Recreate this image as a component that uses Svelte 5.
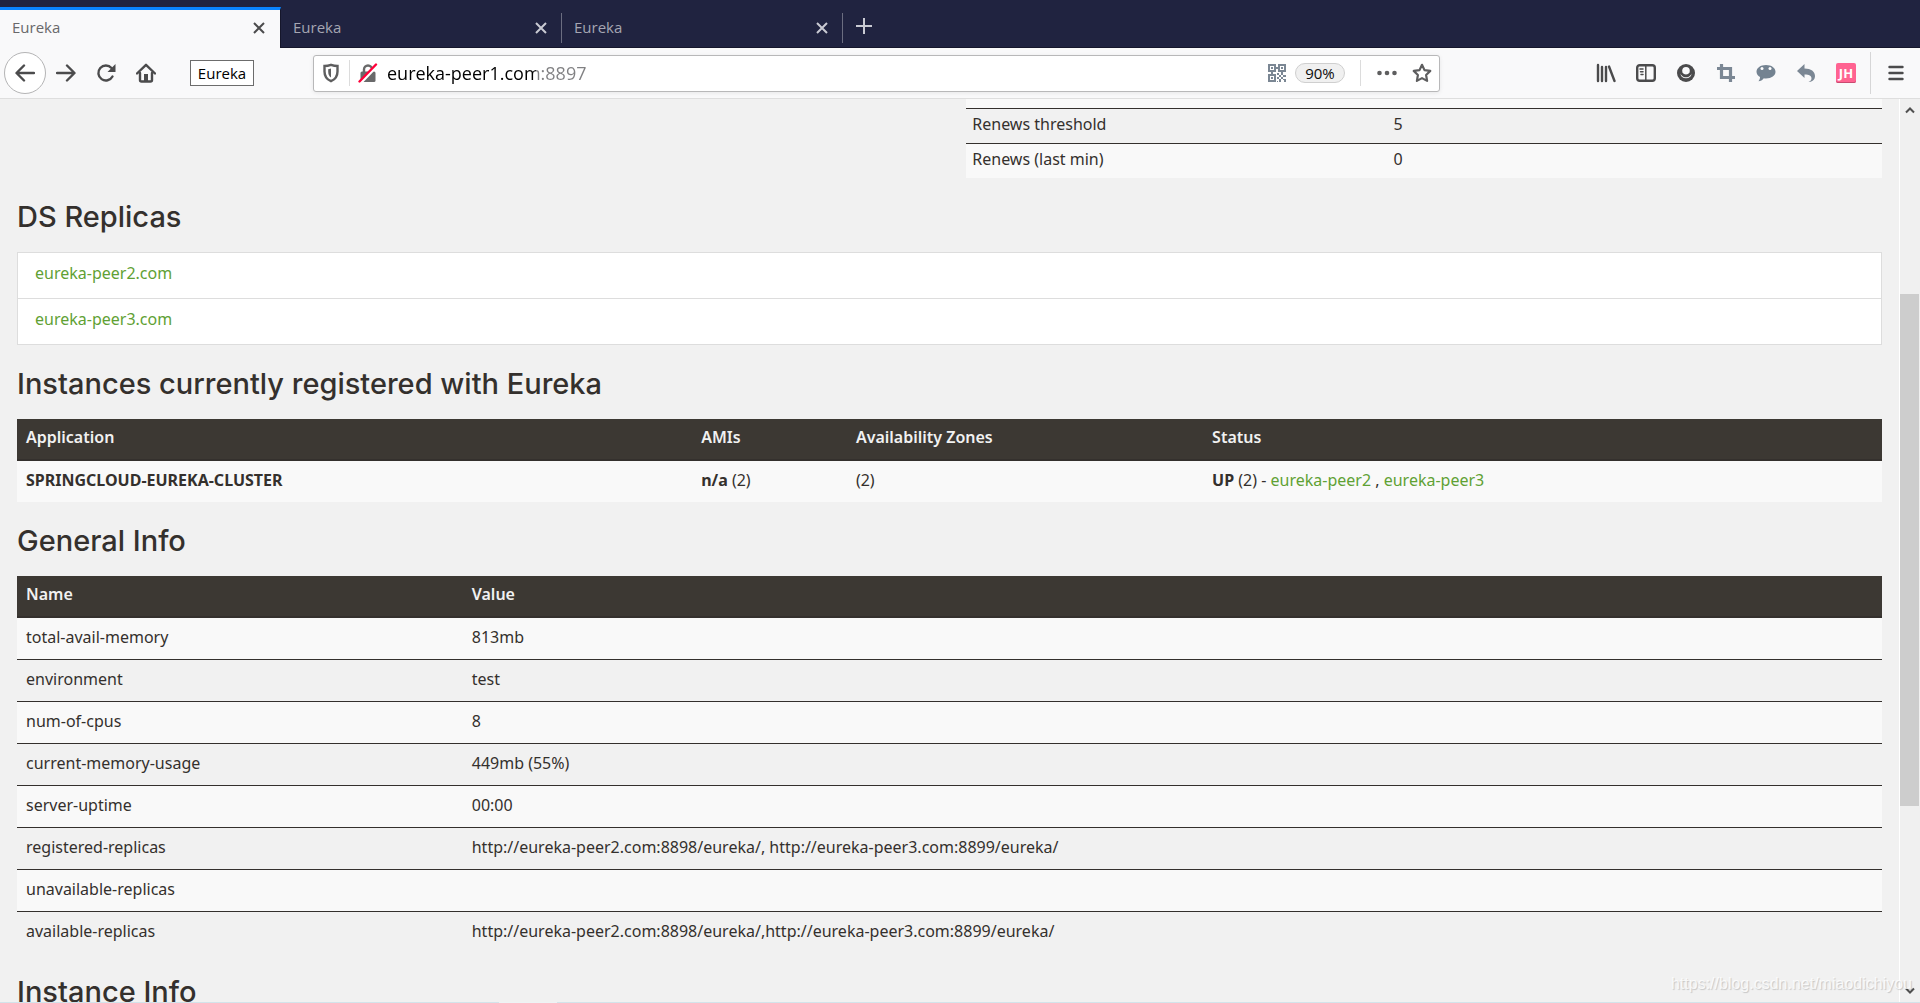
<script>
  let address = $state('eureka-peer1.com:8897');
  let active = $state(0);

  const tabs = ['Eureka', 'Eureka', 'Eureka'];

  const replicas = ['eureka-peer2.com', 'eureka-peer3.com'];

  const renews = [
    ['Renews threshold', '5'],
    ['Renews (last min)', '0'],
  ];

  const generalInfo = [
    ['total-avail-memory', '813mb'],
    ['environment', 'test'],
    ['num-of-cpus', '8'],
    ['current-memory-usage', '449mb (55%)'],
    ['server-uptime', '00:00'],
    ['registered-replicas', 'http://eureka-peer2.com:8898/eureka/, http://eureka-peer3.com:8899/eureka/'],
    ['unavailable-replicas', ''],
    ['available-replicas', 'http://eureka-peer2.com:8898/eureka/,http://eureka-peer3.com:8899/eureka/'],
  ];
</script>

<div class="browser">
  <div class="tabs">
    {#each tabs as tab, i}
      <div class="tab" class:tab--active={i === active}>
        <button class="tab-title" onclick={() => (active = i)}>{tab}</button>
        <button class="tab-close" aria-label="Close tab">
          <svg width="12" height="12" viewBox="0 0 12 12"><path d="M1 1l10 10M11 1L1 11" /></svg>
        </button>
      </div>
    {/each}
    <button class="new-tab" aria-label="New tab">
      <svg width="18" height="18" viewBox="0 0 18 18"><path d="M9 1v16M1 9h16" /></svg>
    </button>
  </div>

  <div class="toolbar">
    <button class="tool tool--back" aria-label="Back">
      <svg width="20" height="20" viewBox="0 0 20 20" class="line"><path d="M19 10H2M9 2.5L1.5 10 9 17.5" /></svg>
    </button>
    <button class="tool" aria-label="Forward">
      <svg width="20" height="20" viewBox="0 0 20 20" class="line"><path d="M1 10h17M11 2.500l7.500 7.500-7.500 7.500" /></svg>
    </button>
    <button class="tool" aria-label="Reload">
      <svg width="20" height="20" viewBox="0 0 20 20" class="line">
        <path d="M16.500 13.500A7.500 7.500 0 1 1 15.500 5" />
        <path d="M19.500 1v8h-8z" class="fill" />
      </svg>
    </button>
    <button class="tool" aria-label="Home">
      <svg width="20" height="20" viewBox="0 0 20 20" class="line">
        <path d="M1 10.500L10 1.800l9 8.700" />
        <path d="M4 10v7q0 1.500 1.500 1.500h9q1.500 0 1.500-1.500v-7" />
        <path d="M8 11h4v7H8z" class="fill" />
      </svg>
    </button>
    <button class="bookmark">Eureka</button>

    <div class="urlbar">
      <button class="url-icon" aria-label="Tracking protection">
        <svg width="18" height="20" viewBox="0 0 18 20">
          <path d="M9 1.800c2.500.9 4.800 1.200 6.500 1.200v5.500c0 4.500-2 7.800-6.500 9.700-4.500-1.900-6.500-5.200-6.500-9.700V3c1.700 0 4-.3 6.500-1.200z" fill="none" stroke="#5e5e5f" stroke-width="2.400" />
          <path d="M9 5.500v9c-2-1.200-2.800-3.300-2.800-6V6.200z" fill="#5e5e5f" />
        </svg>
      </button>
      <span class="url-sep"></span>
      <button class="url-icon" aria-label="Connection is not secure">
        <svg width="20" height="20" viewBox="0 0 20 20">
          <path d="M6 9V6.500a4 4 0 0 1 8 0V9" fill="none" stroke="#69696a" stroke-width="2.400" />
          <rect x="2.500" y="8.500" width="15" height="10.500" rx="1.500" fill="#69696a" />
          <path d="M2.500 20L19 3" stroke="#fff" stroke-width="3" />
          <path d="M1.500 18.500L18 1.500" stroke="#ff0039" stroke-width="2.400" stroke-linecap="round" />
        </svg>
      </button>
      <input class="address" type="text" aria-label="Address" bind:value={address} />
      <button class="url-icon" aria-label="QR code">
        <svg width="18" height="18" viewBox="0 0 18 18" fill="#7b8794">
          <path d="M0 0h8v8H0zM2 2v4h4V2zM10 0h8v8h-8zM12 2v4h4V2zM0 10h8v8H0zM2 12v4h4v-4z" fill-rule="evenodd" />
          <path d="M3 3h2v2H3zM13 3h2v2h-2zM3 13h2v2H3zM8 3h2v2H8zM3 8h2v2H3zM13 8h2v2h-2z" />
          <path d="M9 9h2v2H9zM11 11h2v2h-2zM13 9h2v2h-2zM15 11h3v2h-3zM9 13h2v2H9zM13 13h2v2h-2zM11 15h2v3h-2zM15 15h3v3h-2v-2h-1zM9 17h1v1H9z" />
        </svg>
      </button>
      <button class="zoom">90%</button>
      <span class="url-sep url-sep--wide"></span>
      <button class="url-icon" aria-label="Page actions">
        <svg width="20" height="20" viewBox="0 0 20 20" fill="#5e5e5f">
          <circle cx="2.500" cy="10" r="2.300" /><circle cx="10" cy="10" r="2.300" /><circle cx="17.500" cy="10" r="2.300" />
        </svg>
      </button>
      <button class="url-icon url-icon--star" aria-label="Bookmark this page">
        <svg width="20" height="20" viewBox="0 0 20 20">
          <path d="M10 1.800l2.500 5.300 5.800.8-4.200 4.100 1 5.900L10 15.100 4.900 17.900l1-5.900L1.700 7.900l5.800-.8z" fill="none" stroke="#5e5e5f" stroke-width="2.200" stroke-linejoin="round" />
        </svg>
      </button>
    </div>

    <button class="tool" aria-label="Library">
      <svg width="20" height="20" viewBox="0 0 20 20" class="line">
        <path d="M2 2v16M6 4v14M10 4v14M13 3.500L18.500 18" />
      </svg>
    </button>
    <button class="tool" aria-label="Sidebars">
      <svg width="20" height="20" viewBox="0 0 20 20" class="line">
        <rect x="1.200" y="2.200" width="17.600" height="15.600" rx="2.500" />
        <path d="M9.800 2v16" class="thin" />
        <path d="M4 6h3M4.500 8.800h2.500M5 11.600h2" class="thin" />
      </svg>
    </button>
    <button class="tool" aria-label="Account">
      <svg width="20" height="20" viewBox="0 0 20 20">
        <circle cx="10" cy="10" r="9" fill="#4b4b4c" />
        <path d="M4.300 10.500a5.800 5.800 0 0 0 11.400 0c-1 1.800-2 2.500-3 3.200q-2.700 1.300-5.400 0c-1-.7-2-1.400-3-3.200z" fill="#f9f9fa" />
        <circle cx="10" cy="7.800" r="3.800" fill="#f9f9fa" />
        <path d="M6 10.500q4 4.500 8 0" fill="none" stroke="#4b4b4c" stroke-width="1.500" />
      </svg>
    </button>
    <button class="tool" aria-label="Screenshot">
      <svg width="20" height="20" viewBox="0 0 20 20" fill="none" stroke="#7b8794" stroke-width="3.200">
        <path d="M5.500 1v13.500H19M1 5.500h13.500V19" />
      </svg>
    </button>
    <button class="tool" aria-label="Messages">
      <svg width="20" height="20" viewBox="0 0 20 20">
        <path d="M10 2c5.500 0 9.500 2.900 9.500 6.800S15.500 15.500 10 15.500c-.8 0-1.500 0-2.200-.2C6.500 17.200 4.500 18.300 2.500 18.300c.9-1 1.600-2.500 1.500-4.200C1.800 12.900.5 11 .5 8.800.5 4.900 4.500 2 10 2z" fill="#748391" />
        <circle cx="6" cy="5.500" r="1.500" fill="#fff" /><circle cx="14" cy="5.500" r="1.500" fill="#fff" />
      </svg>
    </button>
    <button class="tool" aria-label="Undo close tab">
      <svg width="20" height="20" viewBox="0 0 20 20">
        <path d="M8.500 1v4.500c6.500 0 10.500 3 10.500 7.500 0 3.500-2.500 6-6.500 6 2.500-1.200 3-2.500 3-3.800 0-2.200-2.300-3.700-7-3.700V15L1 8z" fill="#7b8794" />
      </svg>
    </button>
    <button class="tool" aria-label="JH extension">
      <span class="jh">JH</span>
    </button>
    <span class="tool-sep"></span>
    <button class="tool" aria-label="Open menu">
      <svg width="20" height="20" viewBox="0 0 20 20" class="line"><path d="M3.500 4h13M3.500 10h13M3.500 16h13" /></svg>
    </button>
  </div>

  <div class="viewport">
    <main>
      <table class="renews">
        <colgroup><col class="c-renew" /><col /></colgroup>
        <tbody>
          <tr class="cut"><td></td><td></td></tr>
          {#each renews as [name, value]}
            <tr><td>{name}</td><td>{value}</td></tr>
          {/each}
        </tbody>
      </table>

      <h1>DS Replicas</h1>
      <ul class="replicas">
        {#each replicas as replica}
          <li><a href="#{replica}">{replica}</a></li>
        {/each}
      </ul>

      <h1>Instances currently registered with Eureka</h1>
      <table class="striped">
        <colgroup><col class="c-app" /><col class="c-ami" /><col class="c-zone" /><col /></colgroup>
        <thead>
          <tr><th>Application</th><th>AMIs</th><th>Availability Zones</th><th>Status</th></tr>
        </thead>
        <tbody>
          <tr>
            <td><b>SPRINGCLOUD-EUREKA-CLUSTER</b></td>
            <td><b>n/a</b> (2)</td>
            <td>(2)</td>
            <td><b>UP</b> (2) - <a href="#peer2">eureka-peer2</a> , <a href="#peer3">eureka-peer3</a></td>
          </tr>
        </tbody>
      </table>

      <h1>General Info</h1>
      <table class="striped">
        <colgroup><col class="c-name" /><col /></colgroup>
        <thead>
          <tr><th>Name</th><th>Value</th></tr>
        </thead>
        <tbody>
          {#each generalInfo as [name, value]}
            <tr><td>{name}</td><td>{value}</td></tr>
          {/each}
        </tbody>
      </table>

      <h1>Instance Info</h1>
    </main>

    <div class="scrollbar">
      <svg width="10" height="8" viewBox="0 0 10 8"><path d="M1 6.500l4-4 4 4" /></svg>
      <div class="track"><div class="thumb"></div></div>
      <svg width="10" height="8" viewBox="0 0 10 8"><path d="M1 1.500l4 4 4-4" /></svg>
    </div>
    <span class="watermark">https://blog.csdn.net/miaodichiyou</span>
  </div>
  <div class="edge"></div>
</div>

<style>
  :global(body) {
    margin: 0;
  }

  .browser {
    display: flex;
    flex-direction: column;
    height: 100vh;
    overflow: hidden;
    background: #f1f1f1;
    font-family: "Open Sans", "Noto Sans", sans-serif;
    color: #34302d;
  }

  button {
    display: flex;
    align-items: center;
    justify-content: center;
    margin: 0;
    padding: 0;
    border: none;
    background: none;
    color: inherit;
    font-family: inherit;
    flex: none;
  }

  svg {
    display: block;
  }

  /* tab strip */
  .tabs {
    display: flex;
    flex: none;
    height: 41px;
    padding-top: 7px;
    background: #202340;
    box-shadow: inset 0 -1px #15162b;
  }

  .tab {
    display: flex;
    align-items: flex-start;
    box-sizing: border-box;
    width: 281px;
    padding: 0 15px 0 12px;
    color: #a5a6b2;
    background: linear-gradient(#6b6d80, #6b6d80) right 3px / 1px 30px no-repeat;
    border-top: 3px solid transparent;
  }

  .tab--active {
    background: #f9f9fa;
    border-top-color: #0a84ff;
    border-right: 1px solid #15162b;
    color: #68686a;
  }

  .tab-title {
    flex: 1;
    justify-content: flex-start;
    height: 34px;
    font-size: 15px;
  }

  .tab-close {
    height: 35px;
  }

  .tab-close path,
  .new-tab path {
    fill: none;
    stroke: #c9cad3;
    stroke-width: 2;
  }

  .tab--active .tab-close path {
    stroke: #4b4b4c;
  }

  .new-tab {
    width: 42px;
    height: 38px;
  }

  /* navigation toolbar */
  .toolbar {
    display: flex;
    align-items: center;
    flex: none;
    height: 50px;
    padding: 0 4px;
    background: #f9f9fa;
    border-bottom: 1px solid #dedede;
  }

  .tool {
    width: 40px;
    height: 40px;
  }

  .tool--back {
    box-sizing: border-box;
    width: 42px;
    height: 42px;
    border: 1px solid #b4b4b5;
    border-radius: 50%;
    background: #fff;
  }

  .line {
    fill: none;
    stroke: #4b4b4c;
    stroke-width: 2.4;
    stroke-linecap: round;
    stroke-linejoin: round;
  }

  .line .fill {
    fill: #4b4b4c;
    stroke: none;
  }

  .line .thin {
    stroke-width: 1.5;
  }

  .bookmark {
    width: 64px;
    height: 26px;
    margin-left: 24px;
    border: 1px solid #6c6c6c;
    background: #fff;
    color: #000;
    font-size: 15px;
  }

  .urlbar {
    display: flex;
    align-items: center;
    flex: 1;
    box-sizing: border-box;
    height: 37px;
    margin: 0 146px 0 59px;
    padding: 0 7px;
    border: 1px solid #b8b8b9;
    border-radius: 3px;
    background: #fff;
    box-shadow: 0 1px 4px rgba(0, 0, 0, 0.08);
  }

  .url-icon {
    width: 20px;
    height: 28px;
  }

  .url-icon--star {
    margin-left: 15px;
  }

  .url-sep {
    width: 1px;
    height: 26px;
    margin: 0 8px;
    background: #dcdcdc;
  }

  .url-sep--wide {
    margin: 0 16px 0 15px;
  }

  /* host in black, port in grey */
  .address {
    flex: 1;
    min-width: 0;
    height: 30px;
    margin-left: 9px;
    padding: 0;
    border: none;
    outline: none;
    background: linear-gradient(90deg, #000 149px, #808082 149px);
    background-clip: text;
    color: transparent;
    font-family: inherit;
    font-size: 18px;
  }

  .zoom {
    box-sizing: border-box;
    width: 50px;
    height: 20px;
    margin-left: 8px;
    border: 1px solid #cfcfcf;
    border-radius: 10px;
    background: #f0f0f0;
    color: #0c0c0d;
    font-size: 15px;
  }

  .jh {
    width: 20px;
    height: 20px;
    border-radius: 2px;
    background: #ff6391;
    box-shadow: inset 0 -1px #c94a70;
    color: #fff;
    font-size: 13px;
    font-weight: 700;
    line-height: 20px;
  }

  .tool-sep {
    width: 1px;
    height: 42px;
    margin: 0 5px 0 4px;
    background: #d6d6d7;
  }

  /* page */
  .viewport {
    position: relative;
    display: flex;
    flex: 1;
    min-height: 0;
  }

  main {
    flex: 1;
    padding: 0 17px;
    overflow: hidden;
    font-family: "Noto Sans", sans-serif;
    font-size: 16px;
    line-height: 23px;
  }

  h1 {
    margin: 21px 0 17px;
    font-family: Inter, "Noto Sans", sans-serif;
    font-size: 29px;
    font-weight: 500;
    line-height: 36px;
  }

  a {
    color: #5fa134;
    text-decoration: none;
  }

  table {
    width: 100%;
    border-collapse: collapse;
    table-layout: fixed;
  }

  td,
  th {
    padding: 7px 9px 11px;
    text-align: left;
  }

  td {
    border-top: 1px solid #34302d;
  }

  th {
    padding-bottom: 10px;
    background: #3c3833;
    border-bottom: 2px solid #34302d;
    color: #f1f1f1;
    font-weight: 600;
  }

  b {
    font-weight: 700;
  }

  .striped td {
    padding: 8px 9px 10px;
  }

  .striped tbody tr:first-child td {
    border-top: none;
  }

  tbody tr:nth-child(odd) {
    background: #f9f9f9;
  }

  .renews {
    width: 49.1%;
    margin-left: auto;
  }

  .renews td {
    padding: 4px 6px 7px;
  }

  .renews .cut td {
    height: 9px;
    padding: 0;
    border: none;
  }

  .c-renew {
    width: 46%;
  }

  .c-app {
    width: 36.2%;
  }

  .c-ami {
    width: 8.3%;
  }

  .c-zone {
    width: 19.1%;
  }

  .c-name {
    width: 23.9%;
  }

  .replicas {
    margin: 0;
    padding: 0;
    border: 1px solid #ddd;
    background: #fff;
    list-style: none;
  }

  .replicas li {
    padding: 9px 17px 13px;
  }

  .replicas li + li {
    border-top: 1px solid #ddd;
  }

  .scrollbar {
    display: flex;
    flex-direction: column;
    align-items: center;
    gap: 6px;
    width: 20px;
    padding: 7px 0;
    border-left: 1px solid #fff;
    background: #f0f0f0;
  }

  .scrollbar path {
    fill: none;
    stroke: #505050;
    stroke-width: 2;
  }

  .track {
    flex: 1;
    align-self: stretch;
    padding-right: 1px;
  }

  .thumb {
    height: 59.5%;
    margin-top: 174px;
    background: #cdcdcd;
  }

  .watermark {
    position: absolute;
    right: 8px;
    bottom: 8px;
    color: rgba(255, 255, 255, 0.8);
    font-family: "Liberation Sans", Arial, sans-serif;
    font-size: 16px;
    line-height: 20px;
    text-shadow: 1px 1px 1px rgba(0, 0, 0, 0.18);
  }

  .edge {
    flex: none;
    height: 1px;
    background: linear-gradient(90deg, #d3e3ea 26%, #eef3f5 26%, #eef3f5 29%, #d3e3ea 29%);
  }
</style>
